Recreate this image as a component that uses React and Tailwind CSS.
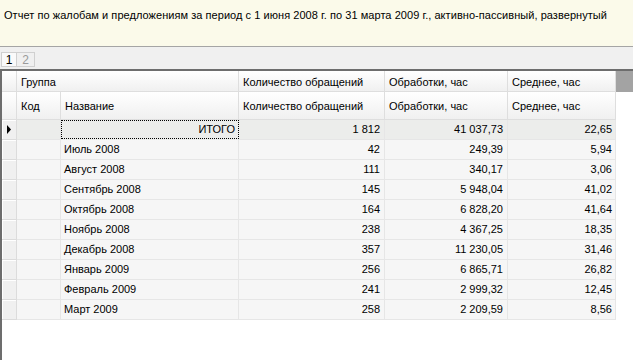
import React from "react";

const rows = [
  { name: "Июль 2008", count: "42", work: "249,39", avg: "5,94" },
  { name: "Август 2008", count: "111", work: "340,17", avg: "3,06" },
  { name: "Сентябрь 2008", count: "145", work: "5 948,04", avg: "41,02" },
  { name: "Октябрь 2008", count: "164", work: "6 828,20", avg: "41,64" },
  { name: "Ноябрь 2008", count: "238", work: "4 367,25", avg: "18,35" },
  { name: "Декабрь 2008", count: "357", work: "11 230,05", avg: "31,46" },
  { name: "Январь 2009", count: "256", work: "6 865,71", avg: "26,82" },
  { name: "Февраль 2009", count: "241", work: "2 999,32", avg: "12,45" },
  { name: "Март 2009", count: "258", work: "2 209,59", avg: "8,56" },
];

const cols = "grid grid-cols-[15px_44px_178px_146px_123px_108px]";
const head =
  "flex items-center pl-[4px] pt-[2px] bg-gradient-to-b from-white to-[#f0f0f0] border-r border-b border-[#dedede] whitespace-nowrap overflow-hidden";
const cell =
  "flex items-center border-r border-b border-[#e6e6e6] whitespace-nowrap overflow-hidden";

function Indicator({ children }) {
  return (
    <div className="flex items-center justify-center bg-[#f0f0f0] border-r border-b border-[#dcdcdc] shadow-[inset_1px_1px_0_#ffffff]">
      {children}
    </div>
  );
}

export default function App() {
  return (
    <div
      className="w-[633px] h-[360px] bg-white overflow-hidden flex flex-col text-[11px] text-black"
      style={{ fontFamily: '"Liberation Sans", Tahoma, sans-serif' }}
    >
      {/* report title */}
      <div className="h-[47px] shrink-0 bg-[#fbfaea] border-b border-[#a5a5a5] px-[4px] pt-[7px] whitespace-nowrap tracking-[0.05px]">
        Отчет по жалобам и предложениям за период с 1 июня 2008 г. по 31 марта 2009 г., активно-пассивный, развернутый
      </div>

      {/* page tabs */}
      <div className="h-[22px] shrink-0 bg-[#f0f0f0] flex items-start pt-[5px] pl-[1px]">
        <div className="w-[16px] h-[15px] flex items-center justify-center bg-[#fafafa] border border-[#d0d0d0] text-[12px] text-black">
          1
        </div>
        <div className="w-[18px] h-[15px] flex items-center justify-center bg-[#f0f0f0] border border-l-0 border-[#d0d0d0] text-[12px] text-[#9a9a9a]">
          2
        </div>
      </div>

      {/* grid */}
      <div className="flex-1 flex border-t-2 border-l-2 border-[#6d6d6d]">
        <div className="w-[614px]">
          <div className={`${cols} h-[21px]`}>
            <div className={head} />
            <div className={`${head} col-span-2`}>Группа</div>
            <div className={head}>Количество обращений</div>
            <div className={head}>Обработки, час</div>
            <div className={head}>Среднее, час</div>
          </div>
          <div className={`${cols} h-[28px]`}>
            <div className={head} />
            <div className={head}>Код</div>
            <div className={head}>Название</div>
            <div className={head}>Количество обращений</div>
            <div className={head}>Обработки, час</div>
            <div className={head}>Среднее, час</div>
          </div>

          <div className={`${cols} h-[20px] bg-[#ecedeb]`}>
            <Indicator>
              <svg width="6" height="9" viewBox="0 0 6 9">
                <path d="M1 0 L5 4.5 L1 9 Z" fill="#000" />
              </svg>
            </Indicator>
            <div className={cell} />
            <div className="flex items-center justify-end pr-[3px] border border-dotted border-black mb-[1px]">
              ИТОГО
            </div>
            <div className={`${cell} justify-end pr-[4px]`}>1 812</div>
            <div className={`${cell} justify-end pr-[4px]`}>41 037,73</div>
            <div className={`${cell} justify-end pr-[3px]`}>22,65</div>
          </div>

          {rows.map((r) => (
            <div key={r.name} className={`${cols} h-[20px] bg-[#f6f6f6]`}>
              <Indicator />
              <div className={cell} />
              <div className={`${cell} pl-[3px]`}>{r.name}</div>
              <div className={`${cell} justify-end pr-[4px]`}>{r.count}</div>
              <div className={`${cell} justify-end pr-[4px]`}>{r.work}</div>
              <div className={`${cell} justify-end pr-[3px]`}>{r.avg}</div>
            </div>
          ))}
        </div>

        {/* scrollbar stub */}
        <div className="w-[17px]">
          <div className="h-[21px] bg-[#a3a3a3]" />
        </div>
      </div>
    </div>
  );
}
